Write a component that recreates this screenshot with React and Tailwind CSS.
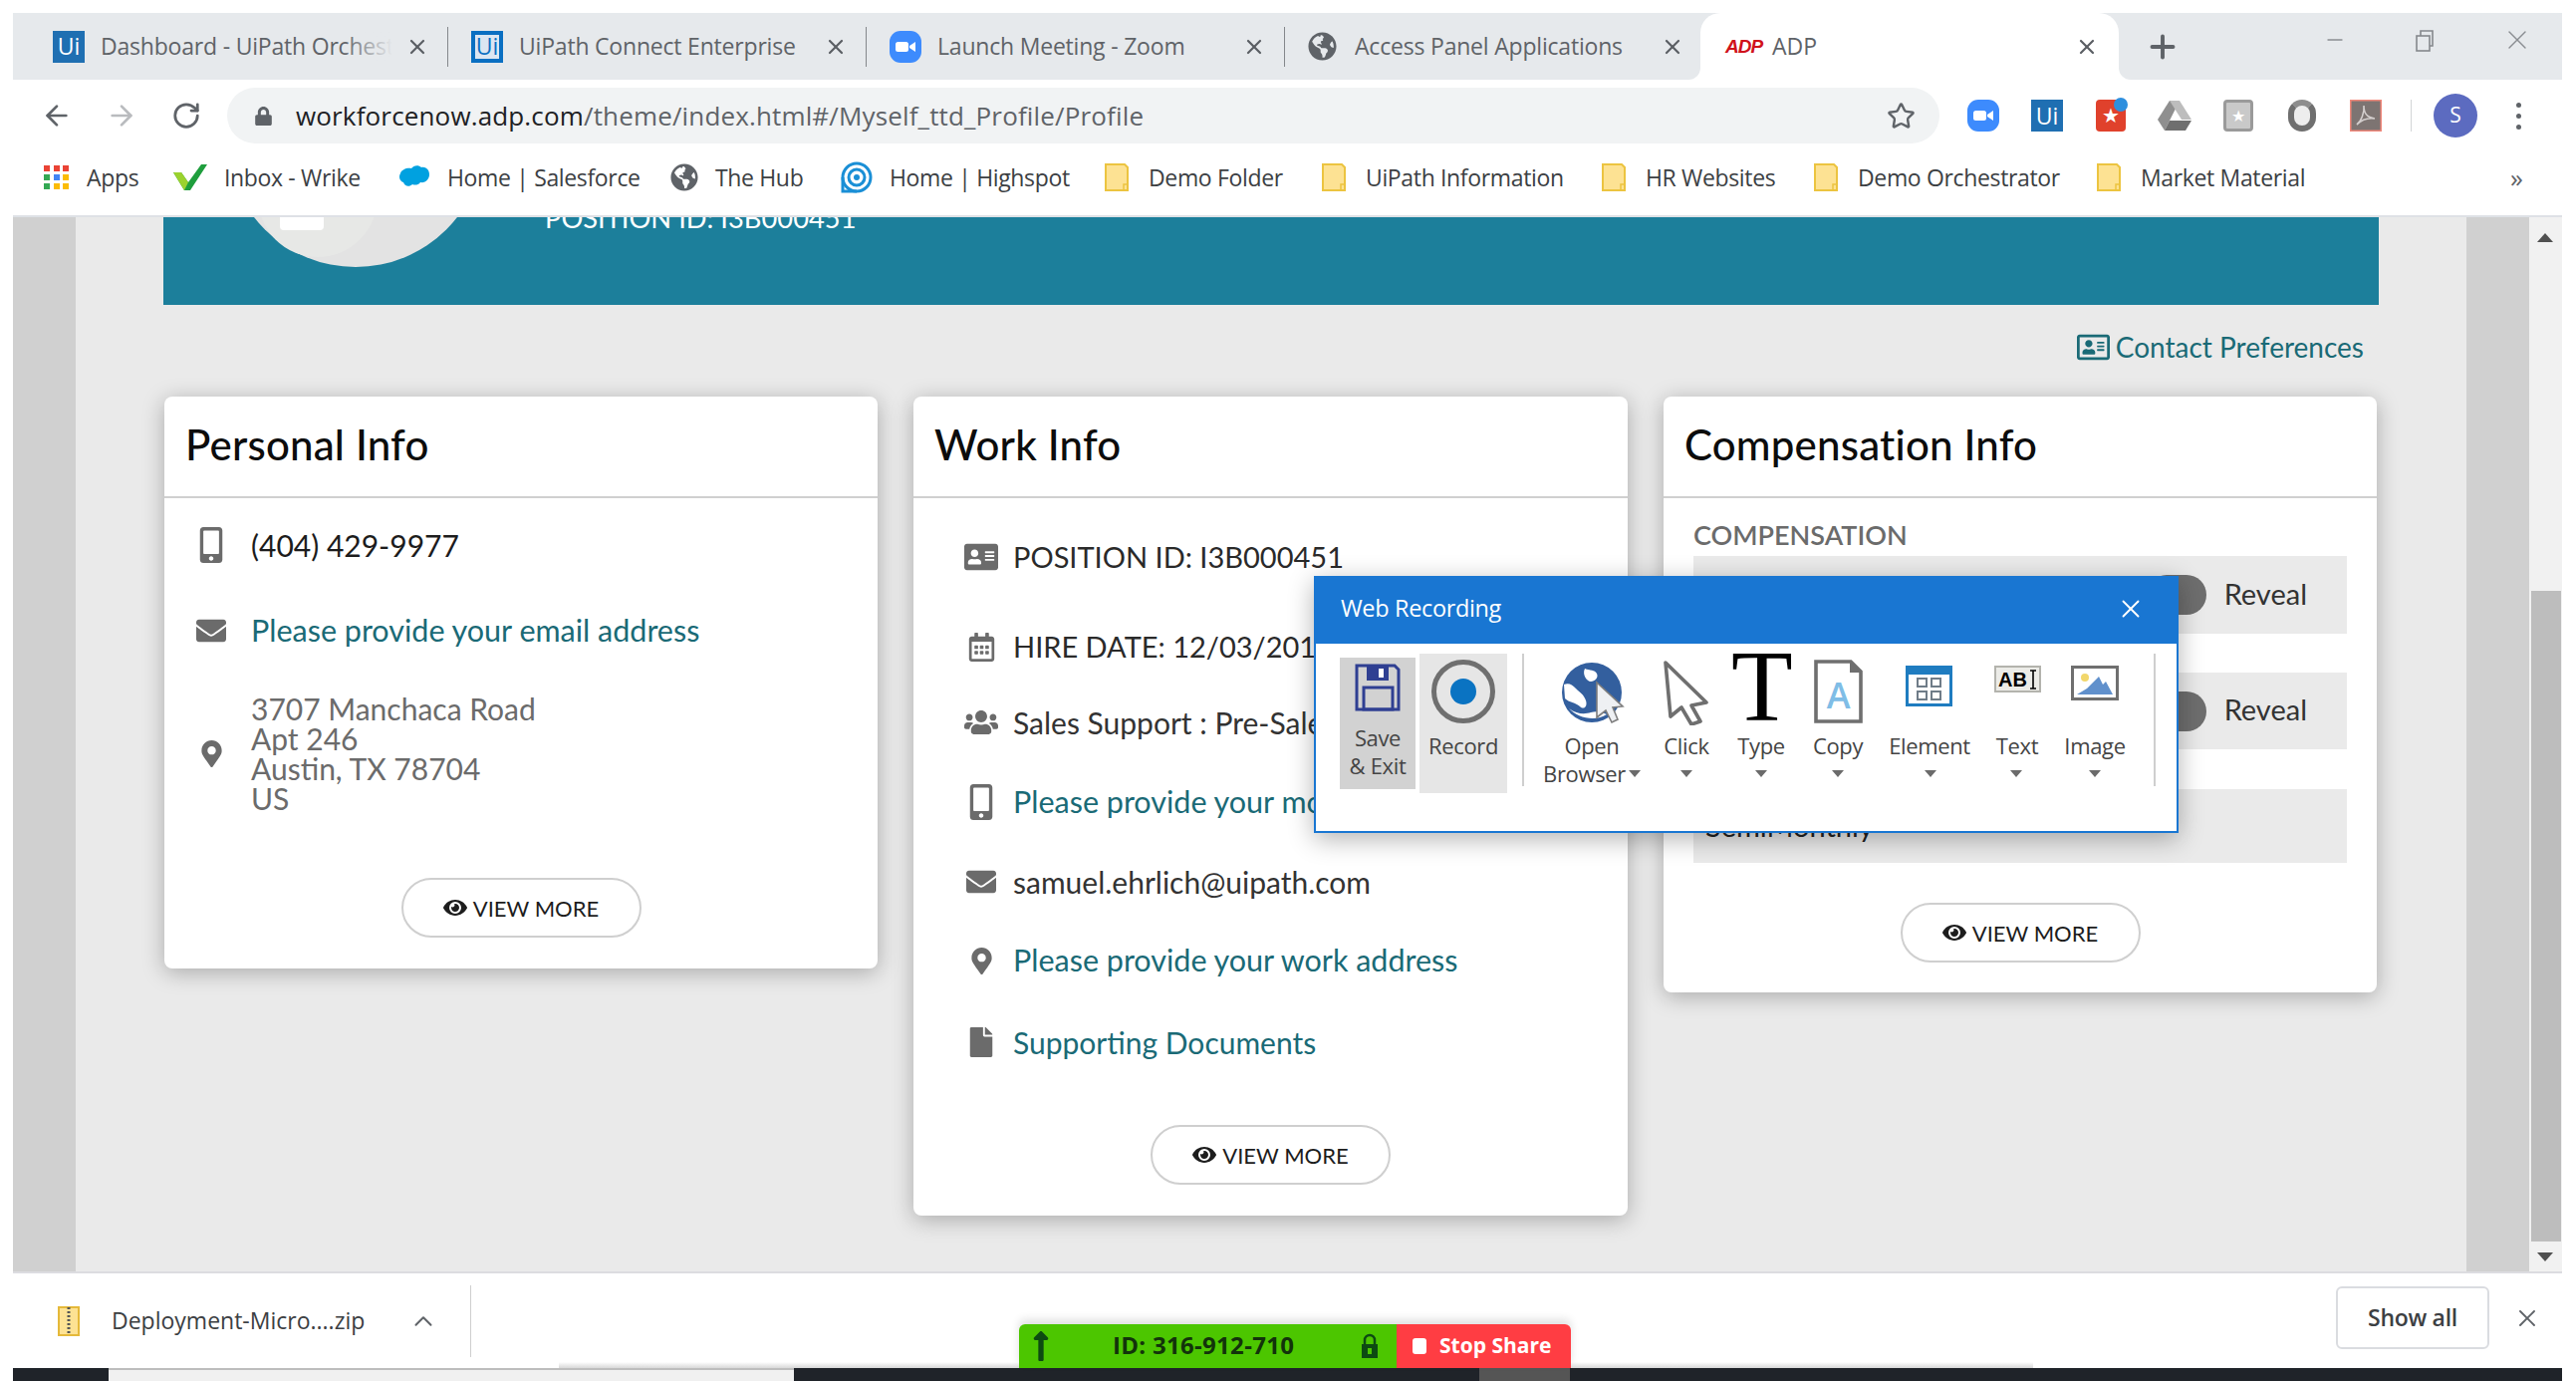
import React from 'react';
import { X, Plus, ArrowLeft, ArrowRight, RotateCw, Star, ChevronUp, Minus } from 'lucide-react';
import {
  FaGlobeAmericas, FaMobileAlt, FaEnvelope, FaMapMarkerAlt, FaAddressCard, FaRegAddressCard, FaRegCalendarAlt,
  FaUsers, FaFile, FaEye, FaLongArrowAltUp, FaLock,
} from 'react-icons/fa';

const UiIcon = ({ outlined }) => (
  <div className={`flex h-8 w-8 shrink-0 items-center justify-center text-[23px] leading-none text-white ${outlined ? 'bg-[#dbe6f2] border-[4px] border-[#0a6fc2] !text-[#0a6fc2]' : 'bg-[#1f6fb2]'}`}>
    Ui
  </div>
);

const ZoomIcon = () => (
  <svg width="32" height="32" viewBox="0 0 32 32" className="shrink-0">
    <rect width="32" height="32" rx="11" fill="#3d8bfd" />
    <rect x="6" y="11" width="13" height="10" rx="2.5" fill="#fff" />
    <path d="M20 15l6-4v10l-6-4z" fill="#fff" />
  </svg>
);

const AdpLogo = () => (
  <span className="w-[32px] shrink-0 font-['Liberation_Sans',sans-serif] text-[19px] font-bold italic leading-none tracking-[-1px] text-[#d0121b]">ADP</span>
);

const Tab = ({ icon, title, fade }) => (
  <div className="relative flex h-full w-[420px] shrink-0 items-center pl-[20px]">
    {icon}
    <div className="relative ml-[16px] w-[293px] overflow-hidden whitespace-nowrap pb-[1px] text-[23px] tracking-[-0.2px] text-[#5f6368]">
      {title}
      {fade && <div className="absolute inset-y-0 right-0 w-[50px] bg-linear-to-l from-[#e6e9ec] to-transparent" />}
    </div>
    <X size={24} strokeWidth={2.2} className="absolute left-[374px] text-[#5a5e63]" />
    <div className="absolute left-[416px] top-[14px] h-[40px] w-[1px] bg-[#85888c]" />
  </div>
);

const ActiveTab = () => (
  <div className="relative -ml-[6px] flex h-full w-[420px] shrink-0 items-center rounded-t-[20px] bg-white pl-[25px]">
    <AdpLogo />
    <span className="ml-[15px] text-[23px] text-[#5f6368]">ADP</span>
    <X size={24} strokeWidth={2.2} className="absolute left-[376px] text-[#5a5e63]" />
    <div className="absolute -left-[12px] bottom-0 h-[12px] w-[12px] bg-white">
      <div className="h-full w-full rounded-br-[12px] bg-[#e6e9ec]" />
    </div>
    <div className="absolute -right-[12px] bottom-0 h-[12px] w-[12px] bg-white">
      <div className="h-full w-full rounded-bl-[12px] bg-[#e6e9ec]" />
    </div>
  </div>
);

const TabStrip = () => (
  <div className="relative flex h-[67px] items-center bg-[#e6e9ec] pl-[20px]">
    <Tab icon={<UiIcon />} title="Dashboard - UiPath Orchestrator" fade />
    <Tab icon={<UiIcon outlined />} title="UiPath Connect Enterprise" />
    <Tab icon={<ZoomIcon />} title="Launch Meeting - Zoom" />
    <Tab icon={<FaGlobeAmericas size={29} className="mr-[2px] shrink-0 text-[#5f6368]" />} title="Access Panel Applications" />
    <ActiveTab />
    <Plus size={36} strokeWidth={2.6} className="ml-[26px] text-[#5f6368]" />
    {/* window controls */}
    <Minus size={24} strokeWidth={1.3} className="absolute left-[2319px] top-[15px] text-[#8a8d91]" />
    <svg width="24" height="24" viewBox="0 0 24 24" fill="none" stroke="#85888c" strokeWidth="1.6" className="absolute left-[2409px] top-[16px]">
      <rect x="4" y="7" width="13" height="15" />
      <path d="M8 7V2h12v15h-3" />
    </svg>
    <X size={32} strokeWidth={1} className="absolute left-[2498px] top-[11px] text-[#8a8d91]" />
  </div>
);

const ExtSlot = ({ children }) => (
  <div className="flex w-[64px] shrink-0 items-center justify-center">{children}</div>
);

const Toolbar = () => (
  <div className="flex h-[64px] items-center bg-white pt-[8px]">
    <div className="ml-[11px] flex w-[65px] justify-center"><ArrowLeft size={32} strokeWidth={2} className="text-[#5f6368]" /></div>
    <div className="flex w-[65px] justify-center"><ArrowRight size={32} strokeWidth={2} className="text-[#b9bbbe]" /></div>
    <div className="flex w-[65px] justify-center"><RotateCw size={30} strokeWidth={2.2} className="text-[#5f6368]" /></div>
    <div className="ml-[9px] flex h-[56px] w-[1719px] items-center rounded-full bg-[#f1f3f4] pl-[27px] pr-[24px]">
      <FaLock size={19} className="shrink-0 text-[#5f6368]" />
      <div className="ml-[23px] flex-1 whitespace-nowrap text-[26px] tracking-[0.15px] text-[#5f6368]">
        <span className="text-[#202124]">workforcenow.adp.com</span>/theme/index.html#/Myself_ttd_Profile/Profile
      </div>
      <Star size={29} strokeWidth={2} className="text-[#5f6368]" />
    </div>
    <div className="ml-[12px] flex items-center">
      <ExtSlot><ZoomIcon /></ExtSlot>
      <ExtSlot><UiIcon /></ExtSlot>
      <ExtSlot>
        <div className="relative flex h-8 w-[30px] items-center justify-center rounded-[4px] bg-[#e0412c] text-[20px] leading-none text-white">
          ★
          <div className="absolute -right-[2px] -top-[2px] h-[14px] w-[14px] rounded-full bg-[#2e8fde]" />
        </div>
      </ExtSlot>
      <ExtSlot>
        <svg width="34" height="30" viewBox="0 0 34 30">
          <path d="M12 0h10L12 20 7 30 0 19z" fill="#8f8f8f" />
          <path d="M12 0h10l12 19H24z" fill="#bdbdbd" />
          <path d="M7 30l5-10h22l-6 10z" fill="#6f6f6f" />
        </svg>
      </ExtSlot>
      <ExtSlot>
        <div className="flex h-8 w-[30px] items-center justify-center rounded-[4px] border-[3px] border-[#9a9a9a] bg-[#c9c9c9] text-[16px] leading-none text-white">★</div>
      </ExtSlot>
      <ExtSlot>
        <div className="h-[32px] w-[28px] rounded-full border-[6px] border-[#6f6f6f] border-t-[#8d8d8d] bg-[#ededed]" />
      </ExtSlot>
      <ExtSlot>
        <svg width="32" height="32" viewBox="0 0 32 32">
          <rect width="32" height="32" fill="#7d7472" stroke="#f0877a" strokeWidth="3" />
          <path d="M7 25c4-3 8-12 7-19 0 8 3 12 11 13-7-1-13 1-18 6z" fill="none" stroke="#d4cfce" strokeWidth="1.6" />
        </svg>
      </ExtSlot>
    </div>
    <div className="ml-[13px] h-[32px] w-[1px] bg-[#d3d5d7]" />
    <div className="ml-[22px] flex h-[44px] w-[44px] items-center justify-center rounded-full bg-[#5c6bc0] text-[21px] text-white">S</div>
    <div className="ml-[39px] flex flex-col gap-[6px]">
      <div className="h-[5px] w-[5px] rounded-full bg-[#5f6368]" />
      <div className="h-[5px] w-[5px] rounded-full bg-[#5f6368]" />
      <div className="h-[5px] w-[5px] rounded-full bg-[#5f6368]" />
    </div>
  </div>
);

const Folder = () => (
  <svg width="24" height="28" viewBox="0 0 24 28" className="mr-[3px] shrink-0">
    <path d="M1 1h19l3 3v23H1z" fill="#fde293" stroke="#ecc440" strokeWidth="2" />
    <path d="M23 21h-4v6" fill="none" stroke="#ecc440" strokeWidth="1.5" />
  </svg>
);

const AppsIcon = () => (
  <div className="grid w-[26px] shrink-0 grid-cols-3 gap-[3px]">
    {['#ea4335', '#ea4335', '#ea4335', '#34a853', '#4285f4', '#fbbc05', '#34a853', '#fbbc05', '#fbbc05'].map((c, i) => (
      <div key={i} className="h-[6px] w-[6px]" style={{ background: c }} />
    ))}
  </div>
);

const WrikeIcon = () => (
  <svg width="34" height="26" viewBox="0 0 34 26" className="shrink-0">
    <path d="M0 8h8l7 10L28 0h6L17 26h-6z" fill="#1f9e3d" />
    <path d="M0 8h8l7 10-4 8z" fill="#9bd22e" />
  </svg>
);

const SalesforceIcon = () => (
  <svg width="32" height="26" viewBox="0 0 32 26" className="shrink-0">
    <path d="M13 4c2-3 7-4 10-1 4-1 8 2 8 7s-4 9-9 8c-2 3-6 3-8 2-3 3-8 2-9-2-4-1-5-6-3-9 1-4 7-6 11-5z" fill="#00a1e0" />
  </svg>
);

const HighspotIcon = () => (
  <svg width="32" height="32" viewBox="0 0 32 32" className="shrink-0">
    <circle cx="16" cy="16" r="14" fill="none" stroke="#1a8fd6" strokeWidth="3" />
    <circle cx="16" cy="16" r="8" fill="none" stroke="#1a8fd6" strokeWidth="3" />
    <circle cx="16" cy="16" r="3" fill="#1a8fd6" />
    <path d="M2 16v14h14" fill="none" stroke="#1a8fd6" strokeWidth="3" />
  </svg>
);

const bookmarks = [
  { icon: <AppsIcon />, label: 'Apps', w: 'w-[130px]' },
  { icon: <WrikeIcon />, label: 'Inbox - Wrike', w: 'w-[226px]' },
  { icon: <SalesforceIcon />, label: 'Home | Salesforce', w: 'w-[273px]' },
  { icon: <FaGlobeAmericas size={28} className="shrink-0 text-[#5f6368]" />, label: 'The Hub', w: 'w-[171px]' },
  { icon: <HighspotIcon />, label: 'Home | Highspot', w: 'w-[265px]' },
  { icon: <Folder />, label: 'Demo Folder', w: 'w-[218px]' },
  { icon: <Folder />, label: 'UiPath Information', w: 'w-[281px]' },
  { icon: <Folder />, label: 'HR Websites', w: 'w-[213px]' },
  { icon: <Folder />, label: 'Demo Orchestrator', w: 'w-[284px]' },
  { icon: <Folder />, label: 'Market Material', w: 'w-[260px]' },
];

const BookmarkBar = () => (
  <div className="flex h-[72px] items-center bg-white pb-[4px] pl-[31px]">
    {bookmarks.map((b) => (
      <div key={b.label} className={`flex shrink-0 items-center gap-[17px] ${b.w}`}>
        {b.icon}
        <span className="whitespace-nowrap text-[23px] tracking-[-0.35px] text-[#3c4043]">{b.label}</span>
      </div>
    ))}
    <span className="ml-[155px] text-[26px] leading-none text-[#5f6368]">»</span>
  </div>
);

const ViewMore = () => (
  <button className="flex h-[60px] w-[241px] items-center justify-center gap-[6px] rounded-full border-2 border-[#cfcfcf] bg-white text-[22px] text-[#1d1d1d]">
    <FaEye size={24} />
    VIEW MORE
  </button>
);

const Card = ({ title, children, width }) => (
  <div className={`${width} shrink-0 rounded-[8px] bg-white shadow-[0_4px_22px_rgba(0,0,0,0.28)]`}>
    <div className="flex h-[102px] items-center border-b-2 border-[#d0d0d0] pb-[3px] pl-[21px] text-[42px] font-medium tracking-[0.2px] text-[#0c0c0c]">
      {title}
    </div>
    {children}
  </div>
);

const PersonalRow = ({ icon, className, children }) => (
  <div className={`flex items-center ${className}`}>
    <div className="ml-[32px] mr-[25px] flex w-[30px] shrink-0 justify-center text-[#6b6b6b]">{icon}</div>
    {children}
  </div>
);

const PersonalInfo = () => (
  <Card title="Personal Info" width="w-[716px]">
    <PersonalRow icon={<FaMobileAlt size={36} />} className="mt-[22px] h-[50px]">
      <span className="text-[30px] text-[#1c1c1c]">(404) 429-9977</span>
    </PersonalRow>
    <PersonalRow icon={<FaEnvelope size={30} />} className="mt-[36px] h-[50px]">
      <span className="text-[30.5px] text-[#1a6a76]">Please provide your email address</span>
    </PersonalRow>
    <PersonalRow icon={<FaMapMarkerAlt size={27} />} className="mt-[38px]">
      <div className="text-[30px] leading-[30px] text-[#6b6b6b]">
        <div>3707 Manchaca Road</div>
        <div>Apt 246</div>
        <div>Austin, TX 78704</div>
        <div>US</div>
      </div>
    </PersonalRow>
    <div className="flex justify-center pb-[31px] pt-[65px]">
      <ViewMore />
    </div>
  </Card>
);

const WorkRow = ({ icon, className, children }) => (
  <div className={`flex h-[40px] items-center ${className}`}>
    <div className="ml-[50px] mr-[14px] flex w-[36px] shrink-0 justify-center text-[#6b6b6b]">{icon}</div>
    <span className="whitespace-nowrap">{children}</span>
  </div>
);

const WorkInfo = () => (
  <Card title="Work Info" width="w-[717px]">
    <WorkRow icon={<FaAddressCard size={34} />} className="mt-[39px] text-[29px] text-[#2a2a2a]">POSITION ID: I3B000451</WorkRow>
    <WorkRow icon={<FaRegCalendarAlt size={29} />} className="mt-[50px] text-[29px] text-[#2a2a2a]">HIRE DATE: 12/03/2018</WorkRow>
    <WorkRow icon={<FaUsers size={34} />} className="mt-[36px] text-[30px] text-[#333]">Sales Support : Pre-Sales</WorkRow>
    <WorkRow icon={<FaMobileAlt size={36} />} className="mt-[40px] text-[30.5px] text-[#1a6a76]">Please provide your mobile number</WorkRow>
    <WorkRow icon={<FaEnvelope size={30} />} className="mt-[40px] text-[30px] text-[#333]">samuel.ehrlich@uipath.com</WorkRow>
    <WorkRow icon={<FaMapMarkerAlt size={27} />} className="mt-[39px] text-[30.5px] text-[#1a6a76]">Please provide your work address</WorkRow>
    <WorkRow icon={<FaFile size={30} />} className="mt-[42px] text-[30px] text-[#1a6a76]">Supporting Documents</WorkRow>
    <div className="flex justify-center pb-[31px] pt-[63px]">
      <ViewMore />
    </div>
  </Card>
);

const RevealRow = ({ className }) => (
  <div className={`flex items-center justify-end bg-[#eaeaea] pr-[40px] ${className}`}>
    <div className="h-[40px] w-[60px] rounded-full bg-[#6e6e6e]" />
    <span className="ml-[18px] pb-[3px] text-[29px] text-[#333]">Reveal</span>
  </div>
);

const CompensationInfo = () => (
  <Card title="Compensation Info" width="w-[716px]">
    <div className="px-[30px]">
      <div className="flex h-[58px] items-end pb-[8px] text-[27px] font-semibold leading-none text-[#6b6b6b]">COMPENSATION</div>
      <RevealRow className="h-[78px]" />
      <RevealRow className="mt-[39px] h-[77px]" />
      <div className="mt-[40px] flex h-[74px] items-center bg-[#eaeaea] pl-[12px] text-[29px] text-[#222]">SemiMonthly</div>
    </div>
    <div className="flex justify-center pb-[30px] pt-[40px]">
      <ViewMore />
    </div>
  </Card>
);

const Page = () => (
  <div className="flex h-[1060px] border-t-2 border-[#dee1e6]">
    <div className="w-[63px] shrink-0 bg-[#d0d0d0]" />
    <div className="w-[2400px] shrink-0 bg-[#eaeaea] pl-[88px]">
      <div className="relative h-[88px] w-[2224px] overflow-hidden bg-[#1c7f9b]">
        <div className="absolute -top-[208px] left-[64px] h-[258px] w-[258px] rounded-full bg-[#e3e3e3]" />
        <div className="absolute -top-[80px] left-[95px] h-[120px] w-[120px] rounded-full bg-[#e7e8e6]" />
        <div className="absolute -top-[10px] left-[117px] h-[23px] w-[44px] rounded-[4px] bg-white" />
        <div className="absolute -top-[19px] left-[383px] whitespace-nowrap text-[27.3px] text-white">POSITION ID: I3B000451</div>
      </div>
      <div className="flex h-[92px] w-[2224px] items-center justify-end pb-[8px] pr-[15px]">
        <FaRegAddressCard size={33} className="text-[#1a6a76]" />
        <span className="ml-[6px] text-[28px] text-[#1a6a76]">Contact Preferences</span>
      </div>
      <div className="flex items-start gap-[36px] pl-[1px]">
        <PersonalInfo />
        <WorkInfo />
        <CompensationInfo />
      </div>
    </div>
    <div className="w-[63px] shrink-0 bg-[#d0d0d0]" />
    <div className="relative w-[33px] shrink-0 bg-[#f1f1f1]">
      <div className="absolute left-[8px] top-[16px] h-0 w-0 border-x-[8px] border-b-[9px] border-x-transparent border-b-[#505050]" />
      <div className="absolute bottom-[30px] left-[2px] top-[375px] w-[30px] bg-[#bdbdbd]" />
      <div className="absolute bottom-[10px] left-[8px] h-0 w-0 border-x-[8px] border-t-[9px] border-x-transparent border-t-[#505050]" />
    </div>
  </div>
);

const DownloadBar = () => (
  <div className="relative flex h-[97px] items-center border-t-2 border-[#dcdce0] bg-white">
    <svg width="22" height="30" viewBox="0 0 22 30" className="ml-[45px] shrink-0">
      <rect x="1" y="1" width="20" height="28" fill="#fde293" stroke="#e5b93a" strokeWidth="2" />
      <path d="M11 1v26" stroke="#555" strokeWidth="3" strokeDasharray="2 2" />
    </svg>
    <span className="ml-[32px] whitespace-nowrap text-[23px] text-[#3c4043]">Deployment-Micro....zip</span>
    <ChevronUp size={30} strokeWidth={1.6} className="ml-[44px] text-[#5f6368]" />
    <div className="ml-[32px] h-[72px] w-[1px] bg-[#cfcfcf]" />
    <div className="ml-auto flex h-[63px] w-[154px] -translate-y-[3px] items-center justify-center rounded-[6px] border-2 border-[#dadce0] text-[23px] font-semibold tracking-[-0.3px] text-[#3c4043]">Show all</div>
    <X size={28} strokeWidth={1.6} className="ml-[24px] mr-[21px] -translate-y-[3px] text-[#5f6368]" />
  </div>
);

const Taskbar = () => (
  <div className="flex h-[13px] bg-[#1f2329]">
    <div className="w-[96px]" />
    <div className="w-[688px] border-t-2 border-[#bdbdbd] bg-[#f0f0f0]" />
    <div className="w-[688px]" />
    <div className="w-[91px] bg-[#555]" />
  </div>
);

const ZoomShareBar = () => (
  <div className="absolute left-[1023px] top-[1329px] flex h-[44px] w-[554px] overflow-hidden rounded-t-[6px] shadow-[0_-5px_8px_rgba(0,0,0,0.12)]">
    <div className="relative flex w-[379px] items-center bg-[#4cc600] text-[24px] font-bold tracking-[0.3px] text-[#12330b]">
      <FaLongArrowAltUp size={34} className="ml-[5px] text-[#0d4a12]" />
      <span className="absolute left-[94px] top-[3px]">ID: 316-912-710</span>
      <svg width="20" height="26" viewBox="0 0 20 26" className="absolute left-[342px]">
        <path d="M5 11V7a5 5 0 0110 0v4" fill="none" stroke="#0d4a12" strokeWidth="2.5" />
        <rect x="2" y="11" width="16" height="14" fill="#0d4a12" />
        <rect x="8" y="15" width="4" height="6" fill="#4cc600" />
      </svg>
    </div>
    <div className="flex flex-1 items-center bg-[#ff3d43] pl-[16px] text-[21px] font-bold text-white">
      <div className="h-[16px] w-[14px] rounded-[3px] bg-white" />
      <span className="ml-[13px] whitespace-nowrap">Stop Share</span>
    </div>
  </div>
);

const Caret = ({ className }) => (
  <div className={`h-0 w-0 border-x-[6px] border-t-[7px] border-x-transparent border-t-[#6b6b6b] ${className}`} />
);

const SaveIcon = () => (
  <svg width="46" height="48" viewBox="0 0 46 48" fill="none">
    <path d="M2 2h38l4 4v40H2z" stroke="#2f3f92" strokeWidth="3" />
    <rect x="12" y="2" width="22" height="15" fill="#2f3f92" />
    <rect x="24" y="5" width="5" height="9" fill="#fff" />
    <rect x="9" y="24" width="29" height="22" stroke="#2f3f92" strokeWidth="3" />
  </svg>
);

const GlobeCursor = () => (
  <svg width="66" height="64" viewBox="0 0 66 64">
    <circle cx="31" cy="32" r="30" fill="#335f9e" />
    <path d="M3 24c5-2 8 0 12 4s8 6 10 12-2 10-6 6S8 42 4 38z M24 8c5 2 10 1 12 5s-2 8-6 8-9-7-6-13z M8 48c8 9 26 14 38 6-4-2-10-4-16-2s-14 2-22-4z" fill="#fff" />
    <path d="M36 22l26 24-10 1 5 12-6 3-6-12-9 7z" fill="#eef0f3" stroke="#7d7d7d" strokeWidth="1.6" />
  </svg>
);

const CursorIcon = () => (
  <svg width="48" height="66" viewBox="0 0 48 66">
    <path d="M3 3l41 40-15 3 9 16-9 3-10-17-11 9z" fill="#fff" stroke="#6f6f6f" strokeWidth="3.6" strokeLinejoin="round" />
  </svg>
);

const CopyIcon = () => (
  <div className="relative h-[64px] w-[49px]">
    <svg width="49" height="64" viewBox="0 0 49 64" fill="none" className="absolute inset-0">
      <path d="M2 2h35l10 10v50H2z" fill="#fff" stroke="#6f6f6f" strokeWidth="3.6" />
      <path d="M36 2v11h11z" fill="#6f6f6f" />
    </svg>
    <span className="absolute inset-x-0 top-[18px] text-center font-['Open_Sans',sans-serif] text-[36px] font-semibold leading-none text-[#7fbde6]">A</span>
  </div>
);

const ElementIcon = () => (
  <div className="w-[47px] bg-[#1f7cc0] p-[3px] pt-[9px]">
    <div className="grid h-[29px] grid-cols-2 place-items-center gap-y-[2px] bg-white px-[6px] py-[3px]">
      {[0, 1, 2, 3].map((i) => (
        <div key={i} className="h-[10px] w-[11px] border-2 border-[#6f7c88]" />
      ))}
    </div>
  </div>
);

const TextIcon = () => (
  <div className="flex h-[27px] w-[47px] items-center justify-center gap-[2px] border-2 border-[#b3b3ad] bg-[#ecece8] font-['Liberation_Sans',sans-serif] text-[20px] font-bold leading-none tracking-normal text-black">
    AB
    <svg width="8" height="20" viewBox="0 0 8 20" fill="none" stroke="#000" strokeWidth="1.6">
      <path d="M1 1h6M1 19h6M4 1v18" />
    </svg>
  </div>
);

const ImageIcon = () => (
  <svg width="48" height="35" viewBox="0 0 48 35">
    <rect x="1.5" y="1.5" width="45" height="32" fill="#fff" stroke="#6f6f6f" strokeWidth="3" />
    <circle cx="14" cy="12" r="4" fill="#f2d76b" />
    <path d="M6 29l10-6 12-12 4 8 3-3 7 13z" fill="#6090cc" />
  </svg>
);

// absolute inside the toolbar row: each tool has its own place in the reference
const ToolItem = ({ icon, label, left, iconLeft, iconTop, caretLeft }) => (
  <>
    {icon && <div className="absolute" style={{ left: iconLeft, top: iconTop }}>{icon}</div>}
    <div className="absolute top-[88px] -translate-x-1/2 whitespace-nowrap text-[22px] leading-[28px] text-[#444]" style={{ left }}>{label}</div>
    {caretLeft !== undefined && <div className="absolute top-[127px]" style={{ left: caretLeft }}><Caret /></div>}
  </>
);

const WebRecording = () => (
  <div className="absolute left-[1319px] top-[578px] h-[258px] w-[868px] border-2 border-[#1976d2] bg-white font-['Open_Sans',sans-serif] tracking-[-0.35px] shadow-[0_6px_24px_rgba(0,0,0,0.3)]">
    <div className="flex h-[66px] items-center justify-between bg-[#1976d2] pb-[5px] pl-[25px] pr-[31px] text-[23.5px] text-white">
      Web Recording
      <X size={30} strokeWidth={1.5} />
    </div>
    <div className="relative">
      <div className="absolute left-[24px] top-[14px] flex h-[132px] w-[76px] flex-col items-center bg-[#d2d2d2] pt-[6px] text-[22px] leading-[28px] text-[#444]">
        <SaveIcon />
        <div className="mt-[12px] text-center">Save<br />&amp; Exit</div>
      </div>
      <div className="absolute left-[104px] top-[10px] flex h-[140px] w-[88px] flex-col items-center bg-[#e6e6e6] pt-[6px] text-[22px] leading-[28px] text-[#444]">
        <div className="flex h-[64px] w-[64px] items-center justify-center rounded-full border-[5px] border-[#6f6f6f]">
          <div className="h-[26px] w-[26px] rounded-full bg-[#0a73c2]" />
        </div>
        <div className="mt-[8px]">Record</div>
      </div>
      <div className="absolute left-[207px] top-[10px] h-[133px] w-[2px] bg-[#cfcfcf]" />
      <ToolItem
        icon={<GlobeCursor />}
        label={(
          <div className="flex flex-col items-center">
            Open
            <div className="flex items-center gap-[3px]">Browser<Caret /></div>
          </div>
        )}
        left={277}
        iconLeft={246}
        iconTop={17}
      />
      <div className="absolute left-[348px] top-[16px]"><CursorIcon /></div>
      <ToolItem icon={null} label="Click" left={372} caretLeft={366} />
      <div className="absolute left-[417px] -top-[2px] font-['Liberation_Serif',serif] text-[101px] leading-[91px] tracking-normal text-black">T</div>
      <ToolItem icon={null} label="Type" left={447} caretLeft={441} />
      <ToolItem icon={<CopyIcon />} label="Copy" left={524} iconLeft={500} iconTop={16} caretLeft={518} />
      <ToolItem icon={<ElementIcon />} label="Element" left={616} iconLeft={592} iconTop={22} caretLeft={611} />
      <ToolItem icon={<TextIcon />} label="Text" left={704} iconLeft={681} iconTop={22} caretLeft={697} />
      <ToolItem icon={<ImageIcon />} label="Image" left={782} iconLeft={758} iconTop={22} caretLeft={776} />
      <div className="absolute left-[841px] top-[10px] h-[133px] w-[2px] bg-[#cfcfcf]" />
    </div>
  </div>
);

export default function App() {
  return (
    <div className="relative h-[1386px] w-[2586px] overflow-hidden bg-white font-['Open_Sans',sans-serif]">
      <div className="ml-[13px] w-[2559px] pt-[13px]">
        <TabStrip />
        <Toolbar />
        <BookmarkBar />
        <div className="font-['Lato',sans-serif]">
          <Page />
        </div>
        <DownloadBar />
        <Taskbar />
      </div>
      <div className="absolute bottom-[13px] left-[561px] h-[6px] w-[1480px] bg-linear-to-t from-[#d8d8d8] to-white" />
      <ZoomShareBar />
      <WebRecording />
    </div>
  );
}
